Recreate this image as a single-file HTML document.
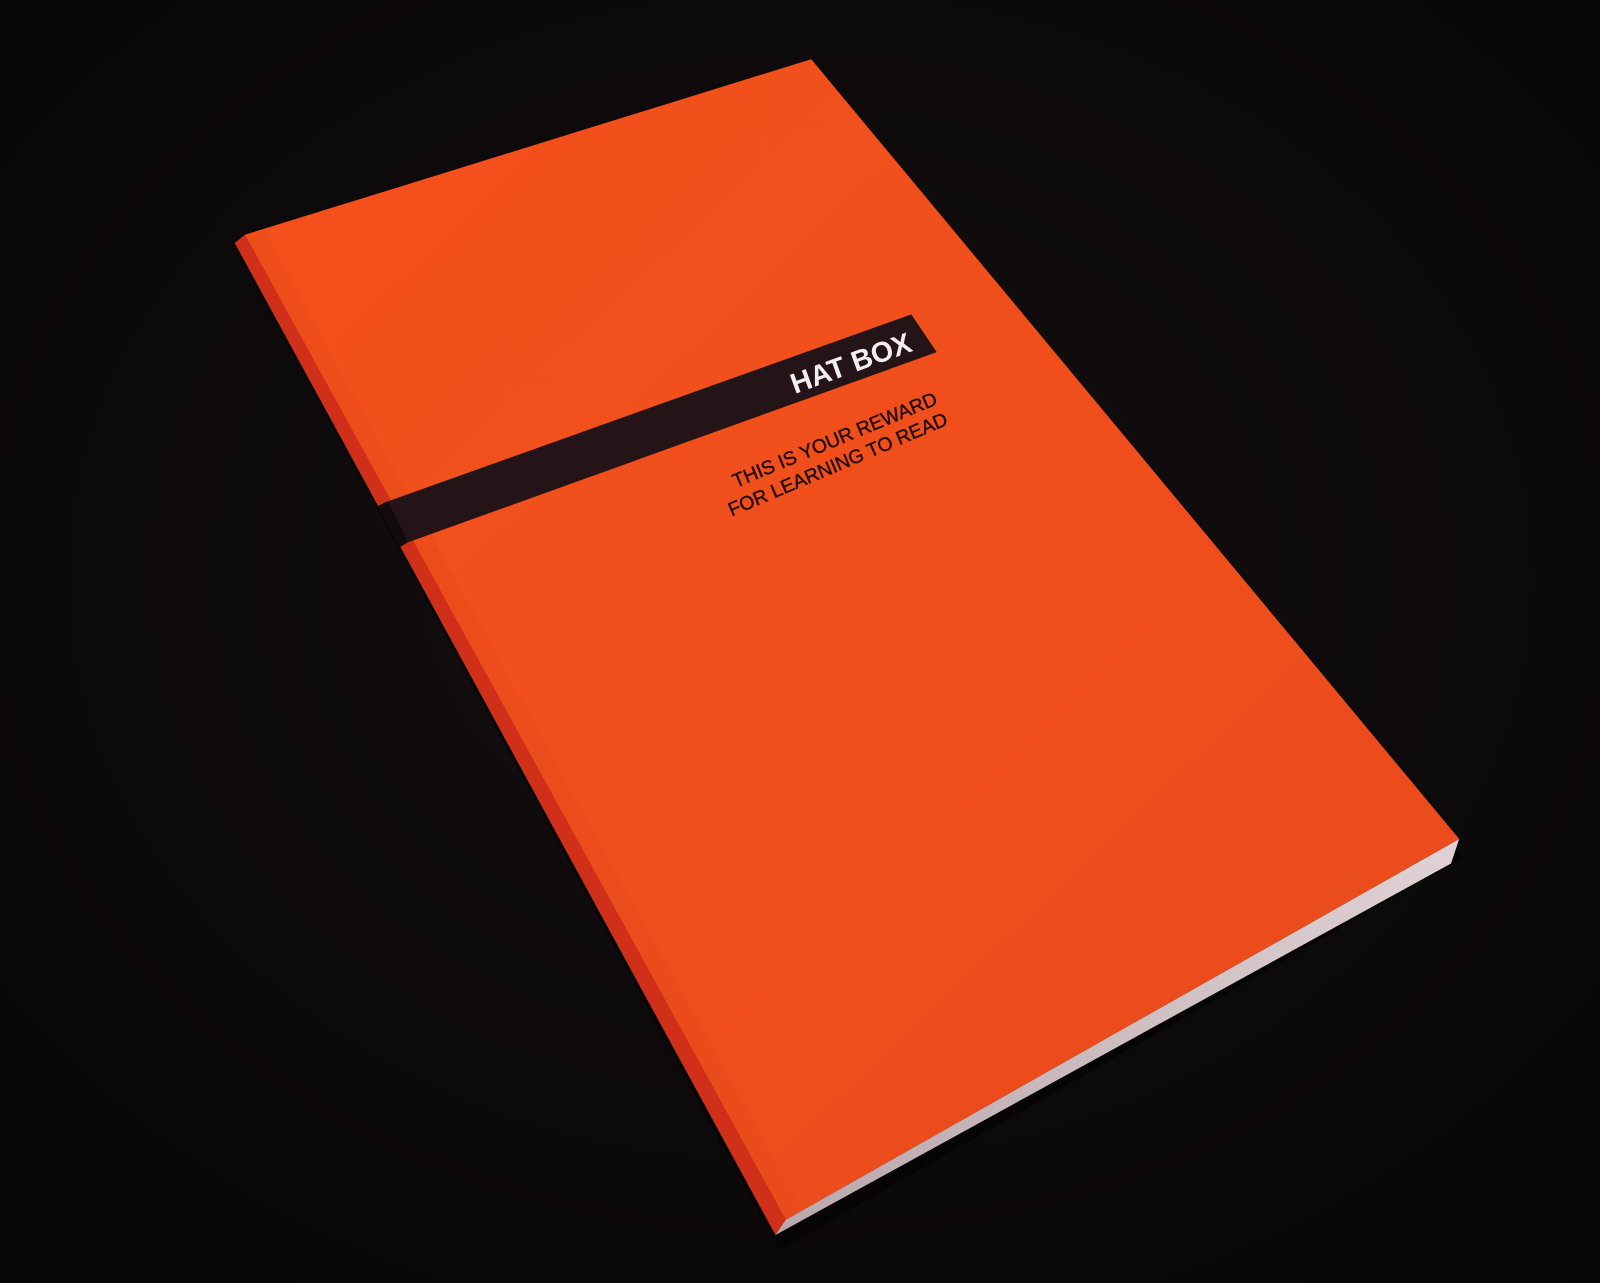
<!DOCTYPE html>
<html><head><meta charset="utf-8"><style>
html,body{margin:0;padding:0;background:#0c090a;overflow:hidden}
svg{display:block}
</style></head><body>
<svg width="1600" height="1283" viewBox="0 0 1568 1257" preserveAspectRatio="none" xmlns="http://www.w3.org/2000/svg">
<defs>
<radialGradient id="bg" cx="0.5" cy="0.45" r="0.75">
<stop offset="0" stop-color="#151012"/><stop offset="1" stop-color="#070506"/>
</radialGradient>
<linearGradient id="cov" x1="0" y1="0" x2="1" y2="1">
<stop offset="0" stop-color="#f4511b"/><stop offset="0.6" stop-color="#ef4e1c"/><stop offset="1" stop-color="#e84a1c"/>
</linearGradient>
<linearGradient id="pg" x1="0" y1="0" x2="1" y2="0">
<stop offset="0" stop-color="#b9a8ad"/><stop offset="1" stop-color="#e0d2d4"/>
</linearGradient>
</defs>
<rect width="1568" height="1257" fill="url(#bg)"/>
<polygon points="240,240 800,70 1440,830 770,1215" fill="#000" opacity="0.5" transform="translate(-6,10)"/>
<polygon points="230,238 240,230 770,1195 760,1210" fill="#d0301a"/>
<polygon points="770,1195 1430,822 1422,846 760,1210" fill="url(#pg)"/>
<polygon points="240,230 795,58 1430,822 770,1195" fill="url(#cov)"/>
<polygon points="240,230 258,225 786,1186 770,1195" fill="#e4481a" opacity="0.35"/>
<polygon points="378,492 893,308 918,345 398,532" fill="#241418"/>
<polygon points="370,496 380,491 400,531 392,536" fill="#120a0c"/>
<g font-family="'Liberation Sans',sans-serif" font-weight="bold">
<text x="0" y="0" fill="#f4eef2" font-size="28" transform="translate(779,386) rotate(-20)">HAT BOX</text>
</g>
<g font-family="'Liberation Sans',sans-serif" fill="#200a08" font-size="19" stroke="#200a08" stroke-width="0.4">
<text transform="translate(721,478) rotate(-22.5)">THIS IS YOUR REWARD</text>
<text transform="translate(717,506) rotate(-23)">FOR LEARNING TO READ</text>
</g>
</svg>
</body></html>
